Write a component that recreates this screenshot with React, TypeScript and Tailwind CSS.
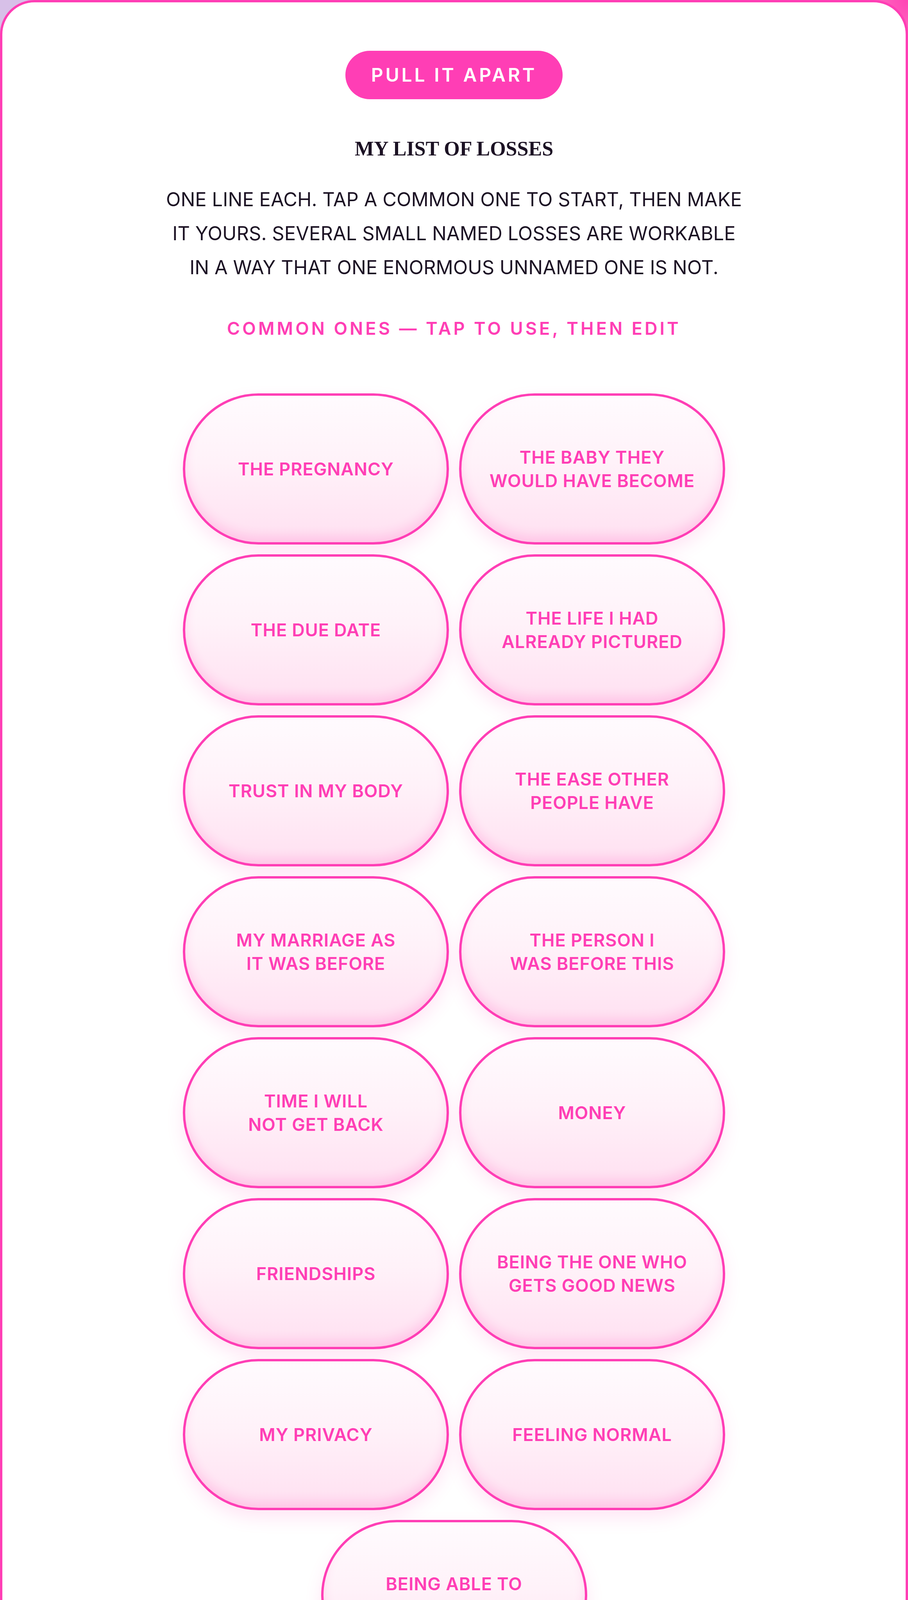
import { Plus } from "lucide-react";

const sans = "[font-family:Inter,'Noto_Sans',sans-serif]";

const commonLosses: string[][] = [
  ["THE PREGNANCY"],
  ["THE BABY THEY", "WOULD HAVE BECOME"],
  ["THE DUE DATE"],
  ["THE LIFE I HAD", "ALREADY PICTURED"],
  ["TRUST IN MY BODY"],
  ["THE EASE OTHER", "PEOPLE HAVE"],
  ["MY MARRIAGE AS", "IT WAS BEFORE"],
  ["THE PERSON I", "WAS BEFORE THIS"],
  ["TIME I WILL", "NOT GET BACK"],
  ["MONEY"],
  ["FRIENDSHIPS"],
  ["BEING THE ONE WHO", "GETS GOOD NEWS"],
  ["MY PRIVACY"],
  ["FEELING NORMAL"],
  ["BEING ABLE TO", "PLAN ANYTHING"],
];

const Label = ({ children, className = "" }: { children: React.ReactNode; className?: string }) => (
  <div
    className={`text-center text-[45px] leading-[54px] font-semibold tracking-[0.135em] text-[#ff3eb5] ${className}`}
  >
    {children}
  </div>
);

const AddLine = ({ className = "" }: { className?: string }) => (
  <button
    className={`flex h-[145px] w-[442px] shrink-0 items-center justify-center gap-[30px] rounded-full border-[5px] border-dashed border-[#ff3eb5] bg-white text-[38px] font-semibold tracking-[0.1em] text-[#ff3eb5] ${className}`}
  >
    <Plus className="h-[30px] w-[30px]" strokeWidth={3.6} />
    <span>ADD LINE</span>
  </button>
);

const Field = ({ className = "" }: { className?: string }) => (
  <div
    className={`flex h-[170px] w-full shrink-0 items-center rounded-[57px] border-[3px] border-[#f9c1e1] bg-[#fffdfe] pl-[68px] shadow-[0_10px_36px_rgba(255,62,181,0.09)] ${className}`}
  >
    <span className="text-[40px] leading-none font-semibold tracking-[0.05em] text-[#c592b6]">...</span>
  </div>
);

const App = () => {
  return (
    <div
      className={`flex min-h-screen bg-[radial-gradient(circle_at_100%_0%,#ff45b4_0px,#ff7ac6_140px,transparent_420px),linear-gradient(180deg,#d7c0e8_0%,#e6c9e6_60%,#dcc2e2_100%)] ${sans}`}
    >
      <div className="flex flex-1 flex-col items-center rounded-[88px] border-[6px] border-[#ff3eb5] bg-white px-[125px] pt-[124px] pb-[182px]">
        {/* Header */}
        <div className="flex h-[124px] w-[556px] shrink-0 items-center justify-center rounded-full bg-[#ff3eb5] text-[48px] font-semibold tracking-[0.12em] text-white">
          PULL IT APART
        </div>

        <h1 className="mt-[96px] text-[52px] leading-[62px] font-bold text-[#1c1224] [font-family:'Liberation_Serif',serif]">
          MY LIST OF LOSSES
        </h1>

        <p className="mt-[55px] text-center text-[49px] leading-[87px] tracking-normal text-[#1c1224]">
          ONE LINE EACH. TAP A COMMON ONE TO START, THEN MAKE
          <br />
          IT YOURS. SEVERAL SMALL NAMED LOSSES ARE WORKABLE
          <br />
          IN A WAY THAT ONE ENORMOUS UNNAMED ONE IS NOT.
        </p>

        <Label className="mt-[86px]">COMMON ONES — TAP TO USE, THEN EDIT</Label>

        {/* Common losses */}
        <div className="mt-[139px] flex w-[1388px] flex-wrap justify-center gap-x-[26px] gap-y-[25px]">
          {commonLosses.map((lines) => (
            <button
              key={lines.join(" ")}
              className="flex h-[387px] w-[681px] flex-col items-center justify-center rounded-full border-[6px] border-[#ff3eb5] bg-[linear-gradient(180deg,#fffbfe_0%,#fff2f9_45%,#ffe0f1_100%)] text-[45px] leading-[60px] font-semibold tracking-[0.02em] text-[#ff3eb5] shadow-[0_20px_44px_rgba(255,62,181,0.13),inset_0_-16px_26px_rgba(255,62,181,0.16)]"
            >
              {lines.map((l) => (
                <span key={l}>{l}</span>
              ))}
            </button>
          ))}
        </div>

        {/* Form */}
        <Label className="mt-[108px]">WHAT I LOST</Label>
        <Field className="mt-[129px]" />

        <Label className="mt-[86px]">WHO IN MY LIFE KNOWS I AM GRIEVING THIS</Label>
        <Field className="mt-[125px]" />

        <AddLine className="mt-[114px]" />

        <button className="mt-[82px] flex h-[171px] w-[592px] shrink-0 items-center justify-center rounded-full border-[6px] border-[#ff8fd0] bg-[linear-gradient(180deg,#ff86cc_0%,#ff45b6_45%,#ff3aae_75%,#e82f9b_100%)] text-[45px] font-semibold tracking-[0.08em] text-white shadow-[0_26px_60px_rgba(255,62,181,0.32),inset_0_6px_0_rgba(255,255,255,0.35)] [text-shadow:0_3px_6px_rgba(160,0,90,0.3)]">
          ADD THIS LOSS
        </button>

        <Label className="mt-[118px]">SAVED</Label>

        {/* Saved list */}
        <div className="mt-[172px] flex h-[346px] w-full shrink-0 items-center justify-center rounded-[78px] border-[4px] border-dashed border-[#f9c0e0] bg-[#fff6fb]">
          <span className="text-[33px] font-semibold tracking-[0.06em] text-[#8c7088]">NOTHING SAVED YET.</span>
        </div>

        <AddLine className="mt-[116px]" />
      </div>
    </div>
  );
};

export default App;
